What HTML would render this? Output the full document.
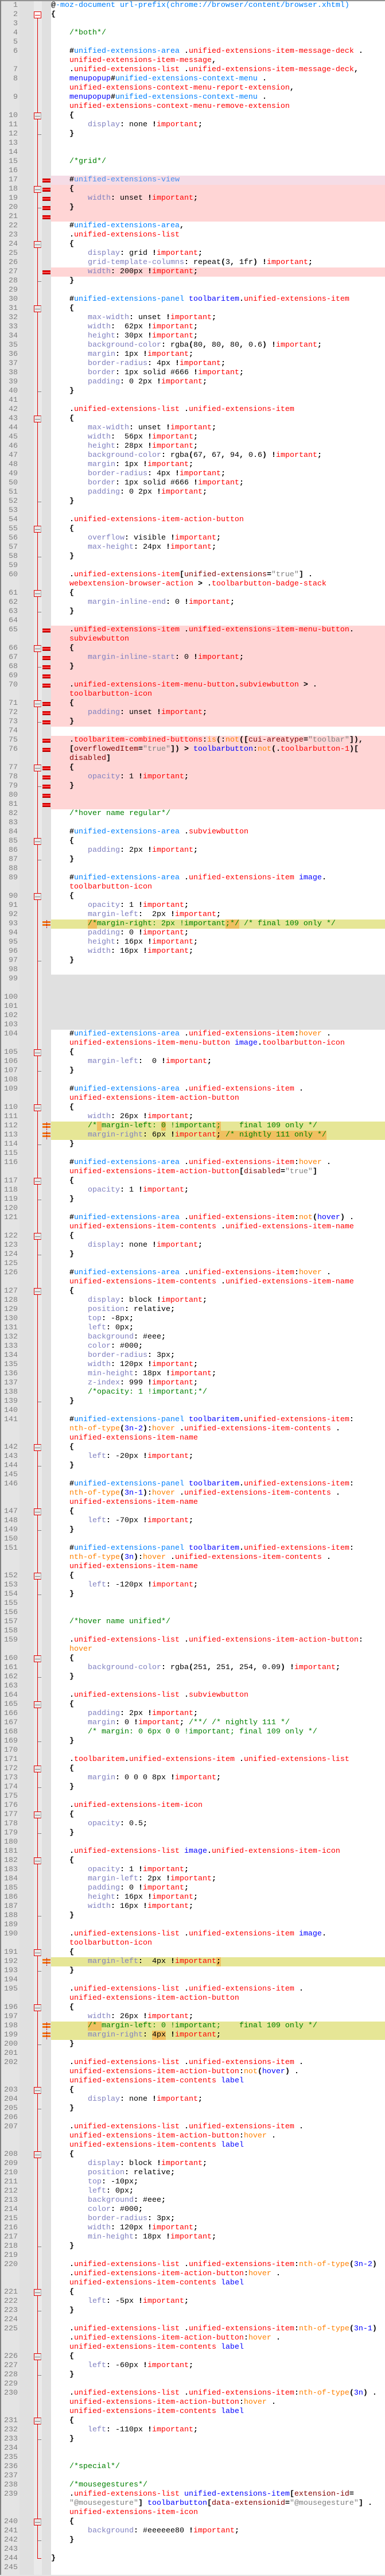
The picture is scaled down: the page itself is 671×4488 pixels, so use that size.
<!DOCTYPE html>
<html lang="en"><head><meta charset="utf-8"><title>userChrome.css compare</title>
<style>
html,body{margin:0;width:671px;height:4488px;overflow:hidden;background:#fff}
body{position:relative;font:13.33px/16px "Liberation Mono",monospace;color:#000}
.st{position:absolute;top:2px;height:4484px}
#tb{position:absolute;left:0;top:0;width:671px;height:1px;background:#a0a0a0}
#tb2{position:absolute;left:0;top:1px;width:671px;height:1px;background:#808080}
#lb{position:absolute;left:0;top:0;width:2px;height:4488px;background:#808080}
#bb{position:absolute;left:0;top:4486px;width:671px;height:2px;background:#e4e4e4}
#vl{position:absolute;left:65px;top:32px;width:1px;height:4426px;background:#e00000}
#vb{position:absolute;left:65px;top:4457px;width:7px;height:1px;background:#e00000}
#main{position:absolute;left:0;top:2px;width:671px}
p{margin:0;height:16px;padding-left:89px;position:relative;white-space:pre;line-height:16px}
tt{position:absolute;left:2px;width:29px;text-align:right;color:#808080;font:inherit}
b,i,s,u,a,q,em,abbr,samp,mark{font:inherit;font-style:normal;text-decoration:none;color:inherit}
b{font-weight:bold;color:#000}
i{color:#8080c0}
s{color:#f00}
u{color:#0080ff}
a{color:#00f}
q{color:#ff8000;quotes:none}
q:before,q:after{content:none}
em{color:#008000}
abbr{color:#800000}
samp{color:#808080}
mark{background:#f0c060;display:inline-block;height:16px;vertical-align:top}
.d,.e{background:linear-gradient(90deg,transparent 89px,#ffd5d5 89px)}
.x{background:linear-gradient(90deg,transparent 89px,#f5dce6 89px)}
.g{background:linear-gradient(90deg,transparent 89px,#e0e0e0 89px)}
.y{background:linear-gradient(90deg,transparent 89px,#e6e696 89px)}
.f:before,.F:before,.t:before,.d:after,.x:after,.y:after{content:"";position:absolute}
.f:before{left:59px;top:2px;width:13px;height:12px;box-sizing:border-box;border:1px solid #e00000;border-right-color:#aaa;background:linear-gradient(#808080,#808080) center/9px 1px no-repeat #e8e8e8}
.F:before{left:59px;top:2px;width:13px;height:12px;box-sizing:border-box;border:1px solid #e00000;background:linear-gradient(#e00000,#e00000) center/9px 1px no-repeat #fff}
.t:before{left:66px;top:8px;width:6px;height:1px;background:#808080}
.d:after,.x:after{left:74px;top:5px;width:14px;height:7px;background:linear-gradient(#c00000 0 1px,#e80000 1px 3px,#ff9090 3px 4px,#e00000 4px 6px,#a00000 6px)}
.y:after{left:74px;top:0;width:14px;height:16px;background:repeating-linear-gradient(#c00000 0 2px,transparent 2px 3px) 7px 1px/1px 14px no-repeat,linear-gradient(#f07010,#f07010) 0 3px/14px 3px no-repeat,linear-gradient(#f07010,#f07010) 0 8px/14px 3px no-repeat}
</style></head><body>
<div class="st" style="left:2px;width:32px;background:#e4e4e4"></div>
<div class="st" style="left:34px;width:25px;background:#e0e0e0"></div>
<div class="st" style="left:59px;width:14px;background:repeating-conic-gradient(#dcdcdc 0 25%,#f8f8f8 0 50%) 0 0/2px 2px"></div>
<div class="st" style="left:73px;width:16px;background:#e0e0e0"></div>
<div id="vl"></div><div id="vb"></div>
<div id="tb"></div><div id="tb2"></div><div id="lb"></div><div id="bb"></div>
<div id="main">
<p><tt>1</tt><b>@</b><u>-moz-document url-prefix(chrome://browser/content/browser.xhtml)</u></p>
<p class="F"><tt>2</tt><b>{</b></p>
<p><tt>3</tt></p>
<p><tt>4</tt>    <em>/*both*/</em></p>
<p><tt>5</tt></p>
<p><tt>6</tt>    <b>#</b><u>unified-extensions-area</u> <b>.</b><s>unified-extensions-item-message-deck</s> <b>.</b></p>
<p>    <s>unified-extensions-item-message</s><b>,</b></p>
<p><tt>7</tt>    <b>.</b><s>unified-extensions-list</s> <b>.</b><s>unified-extensions-item-message-deck</s><b>,</b></p>
<p><tt>8</tt>    <a>menupopup</a><b>#</b><u>unified-extensions-context-menu</u> <b>.</b></p>
<p>    <s>unified-extensions-context-menu-report-extension</s><b>,</b></p>
<p><tt>9</tt>    <a>menupopup</a><b>#</b><u>unified-extensions-context-menu</u> <b>.</b></p>
<p>    <s>unified-extensions-context-menu-remove-extension</s></p>
<p class="f"><tt>10</tt>    <b>{</b></p>
<p><tt>11</tt>        <i>display</i><b>:</b> none <b>!</b><s>important</s><b>;</b></p>
<p class="t"><tt>12</tt>    <b>}</b></p>
<p><tt>13</tt></p>
<p><tt>14</tt></p>
<p><tt>15</tt>    <em>/*grid*/</em></p>
<p><tt>16</tt></p>
<p class="x"><tt>17</tt>    <b>#</b><u style="color:#4a90f0">unified-extensions-view</u></p>
<p class="d f"><tt>18</tt>    <b>{</b></p>
<p class="d"><tt>19</tt>        <i>width</i><b>:</b> unset <b>!</b><s>important</s><b>;</b></p>
<p class="d t"><tt>20</tt>    <b>}</b></p>
<p class="d"><tt>21</tt></p>
<p><tt>22</tt>    <b>#</b><u>unified-extensions-area</u><b>,</b></p>
<p><tt>23</tt>    <b>.</b><s>unified-extensions-list</s></p>
<p class="f"><tt>24</tt>    <b>{</b></p>
<p><tt>25</tt>        <i>display</i><b>:</b> grid <b>!</b><s>important</s><b>;</b></p>
<p><tt>26</tt>        <i>grid-template-columns</i><b>:</b> repeat<b>(</b>3<b>,</b> 1fr<b>)</b> <b>!</b><s>important</s><b>;</b></p>
<p class="d"><tt>27</tt>        <i>width</i><b>:</b> 200px <b>!</b><s>important</s><b>;</b></p>
<p class="t"><tt>28</tt>    <b>}</b></p>
<p><tt>29</tt></p>
<p><tt>30</tt>    <b>#</b><u>unified-extensions-panel</u> <a>toolbaritem</a><b>.</b><s>unified-extensions-item</s></p>
<p class="f"><tt>31</tt>    <b>{</b></p>
<p><tt>32</tt>        <i>max-width</i><b>:</b> unset <b>!</b><s>important</s><b>;</b></p>
<p><tt>33</tt>        <i>width</i><b>:</b>  62px <b>!</b><s>important</s><b>;</b></p>
<p><tt>34</tt>        <i>height</i><b>:</b> 30px <b>!</b><s>important</s><b>;</b></p>
<p><tt>35</tt>        <i>background-color</i><b>:</b> rgba<b>(</b>80<b>,</b> 80<b>,</b> 80<b>,</b> 0.6<b>)</b> <b>!</b><s>important</s><b>;</b></p>
<p><tt>36</tt>        <i>margin</i><b>:</b> 1px <b>!</b><s>important</s><b>;</b></p>
<p><tt>37</tt>        <i>border-radius</i><b>:</b> 4px <b>!</b><s>important</s><b>;</b></p>
<p><tt>38</tt>        <i>border</i><b>:</b> 1px solid #666 <b>!</b><s>important</s><b>;</b></p>
<p><tt>39</tt>        <i>padding</i><b>:</b> 0 2px <b>!</b><s>important</s><b>;</b></p>
<p class="t"><tt>40</tt>    <b>}</b></p>
<p><tt>41</tt></p>
<p><tt>42</tt>    <b>.</b><s>unified-extensions-list</s> <b>.</b><s>unified-extensions-item</s></p>
<p class="f"><tt>43</tt>    <b>{</b></p>
<p><tt>44</tt>        <i>max-width</i><b>:</b> unset <b>!</b><s>important</s><b>;</b></p>
<p><tt>45</tt>        <i>width</i><b>:</b>  56px <b>!</b><s>important</s><b>;</b></p>
<p><tt>46</tt>        <i>height</i><b>:</b> 28px <b>!</b><s>important</s><b>;</b></p>
<p><tt>47</tt>        <i>background-color</i><b>:</b> rgba<b>(</b>67<b>,</b> 67<b>,</b> 94<b>,</b> 0.6<b>)</b> <b>!</b><s>important</s><b>;</b></p>
<p><tt>48</tt>        <i>margin</i><b>:</b> 1px <b>!</b><s>important</s><b>;</b></p>
<p><tt>49</tt>        <i>border-radius</i><b>:</b> 4px <b>!</b><s>important</s><b>;</b></p>
<p><tt>50</tt>        <i>border</i><b>:</b> 1px solid #666 <b>!</b><s>important</s><b>;</b></p>
<p><tt>51</tt>        <i>padding</i><b>:</b> 0 2px <b>!</b><s>important</s><b>;</b></p>
<p class="t"><tt>52</tt>    <b>}</b></p>
<p><tt>53</tt></p>
<p><tt>54</tt>    <b>.</b><s>unified-extensions-item-action-button</s></p>
<p class="f"><tt>55</tt>    <b>{</b></p>
<p><tt>56</tt>        <i>overflow</i><b>:</b> visible <b>!</b><s>important</s><b>;</b></p>
<p><tt>57</tt>        <i>max-height</i><b>:</b> 24px <b>!</b><s>important</s><b>;</b></p>
<p class="t"><tt>58</tt>    <b>}</b></p>
<p><tt>59</tt></p>
<p><tt>60</tt>    <b>.</b><s>unified-extensions-item</s><b>[</b><abbr>unified-extensions</abbr><b>=</b><samp>"true"</samp><b>]</b> <b>.</b></p>
<p>    <s>webextension-browser-action</s> <b>&gt;</b> <b>.</b><s>toolbarbutton-badge-stack</s></p>
<p class="f"><tt>61</tt>    <b>{</b></p>
<p><tt>62</tt>        <i>margin-inline-end</i><b>:</b> 0 <b>!</b><s>important</s><b>;</b></p>
<p class="t"><tt>63</tt>    <b>}</b></p>
<p><tt>64</tt></p>
<p class="d"><tt>65</tt>    <b>.</b><s>unified-extensions-item</s> <b>.</b><s>unified-extensions-item-menu-button</s><b>.</b></p>
<p class="e">    <s>subviewbutton</s></p>
<p class="d f"><tt>66</tt>    <b>{</b></p>
<p class="d"><tt>67</tt>        <i>margin-inline-start</i><b>:</b> 0 <b>!</b><s>important</s><b>;</b></p>
<p class="d t"><tt>68</tt>    <b>}</b></p>
<p class="d"><tt>69</tt></p>
<p class="d"><tt>70</tt>    <b>.</b><s>unified-extensions-item-menu-button</s><b>.</b><s>subviewbutton</s> <b>&gt;</b> <b>.</b></p>
<p class="e">    <s>toolbarbutton-icon</s></p>
<p class="d f"><tt>71</tt>    <b>{</b></p>
<p class="d"><tt>72</tt>        <i>padding</i><b>:</b> unset <b>!</b><s>important</s><b>;</b></p>
<p class="d t"><tt>73</tt>    <b>}</b></p>
<p><tt>74</tt></p>
<p class="d"><tt>75</tt>    <b>.</b><s>toolbaritem-combined-buttons</s><b>:</b><q>is</q><b>(:</b><q>not</q><b>([</b><abbr>cui-areatype</abbr><b>=</b><samp>"toolbar"</samp><b>]),</b></p>
<p class="d"><tt>76</tt>    <b>[</b><abbr>overflowedItem</abbr><b>=</b><samp>"true"</samp><b>])</b> <b>&gt;</b> <a>toolbarbutton</a><b>:</b><q>not</q><b>(.</b><s>toolbarbutton-1</s><b>)[</b></p>
<p class="e">    <abbr>disabled</abbr><b>]</b></p>
<p class="d f"><tt>77</tt>    <b>{</b></p>
<p class="d"><tt>78</tt>        <i>opacity</i><b>:</b> 1 <b>!</b><s>important</s><b>;</b></p>
<p class="d t"><tt>79</tt>    <b>}</b></p>
<p class="d"><tt>80</tt></p>
<p class="d"><tt>81</tt></p>
<p><tt>82</tt>    <em>/*hover name regular*/</em></p>
<p><tt>83</tt></p>
<p><tt>84</tt>    <b>#</b><u>unified-extensions-area</u> <b>.</b><s>subviewbutton</s></p>
<p class="f"><tt>85</tt>    <b>{</b></p>
<p><tt>86</tt>        <i>padding</i><b>:</b> 2px <b>!</b><s>important</s><b>;</b></p>
<p class="t"><tt>87</tt>    <b>}</b></p>
<p><tt>88</tt></p>
<p><tt>89</tt>    <b>#</b><u>unified-extensions-area</u> <b>.</b><s>unified-extensions-item</s> <a>image</a><b>.</b></p>
<p>    <s>toolbarbutton-icon</s></p>
<p class="f"><tt>90</tt>    <b>{</b></p>
<p><tt>91</tt>        <i>opacity</i><b>:</b> 1 <b>!</b><s>important</s><b>;</b></p>
<p><tt>92</tt>        <i>margin-left</i><b>:</b>  2px <b>!</b><s>important</s><b>;</b></p>
<p class="y"><tt>93</tt>        <em><mark>/*</mark>margin-right: 2px !important<mark>;*/</mark> /* final 109 only */</em></p>
<p><tt>94</tt>        <i>padding</i><b>:</b> 0 <b>!</b><s>important</s><b>;</b></p>
<p><tt>95</tt>        <i>height</i><b>:</b> 16px <b>!</b><s>important</s><b>;</b></p>
<p><tt>96</tt>        <i>width</i><b>:</b> 16px <b>!</b><s>important</s><b>;</b></p>
<p class="t"><tt>97</tt>    <b>}</b></p>
<p><tt>98</tt></p>
<p class="g"><tt>99</tt></p>
<p class="g"></p>
<p class="g"><tt>100</tt></p>
<p class="g"><tt>101</tt></p>
<p class="g"><tt>102</tt></p>
<p class="g"><tt>103</tt></p>
<p><tt>104</tt>    <b>#</b><u>unified-extensions-area</u> <b>.</b><s>unified-extensions-item</s><b>:</b><q>hover</q> <b>.</b></p>
<p>    <s>unified-extensions-item-menu-button</s> <a>image</a><b>.</b><s>toolbarbutton-icon</s></p>
<p class="f"><tt>105</tt>    <b>{</b></p>
<p><tt>106</tt>        <i>margin-left</i><b>:</b>  0 <b>!</b><s>important</s><b>;</b></p>
<p class="t"><tt>107</tt>    <b>}</b></p>
<p><tt>108</tt></p>
<p><tt>109</tt>    <b>#</b><u>unified-extensions-area</u> <b>.</b><s>unified-extensions-item</s> <b>.</b></p>
<p>    <s>unified-extensions-item-action-button</s></p>
<p class="f"><tt>110</tt>    <b>{</b></p>
<p><tt>111</tt>        <i>width</i><b>:</b> 26px <b>!</b><s>important</s><b>;</b></p>
<p class="y"><tt>112</tt>        <em>/*<mark> </mark>margin-left: <mark>0</mark> !important<mark>;</mark>    final 109 only */</em></p>
<p class="y"><tt>113</tt>        <i>margin-right</i><b>:</b> 6px <b>!</b><s>important</s><mark><b>;</b><em> /* nightly 111 only */</em></mark></p>
<p class="t"><tt>114</tt>    <b>}</b></p>
<p><tt>115</tt></p>
<p><tt>116</tt>    <b>#</b><u>unified-extensions-area</u> <b>.</b><s>unified-extensions-item</s><b>:</b><q>hover</q> <b>.</b></p>
<p>    <s>unified-extensions-item-action-button</s><b>[</b><abbr>disabled</abbr><b>=</b><samp>"true"</samp><b>]</b></p>
<p class="f"><tt>117</tt>    <b>{</b></p>
<p><tt>118</tt>        <i>opacity</i><b>:</b> 1 <b>!</b><s>important</s><b>;</b></p>
<p class="t"><tt>119</tt>    <b>}</b></p>
<p><tt>120</tt></p>
<p><tt>121</tt>    <b>#</b><u>unified-extensions-area</u> <b>.</b><s>unified-extensions-item</s><b>:</b><q>not</q><b>(</b><a>hover</a><b>)</b> <b>.</b></p>
<p>    <s>unified-extensions-item-contents</s> <b>.</b><s>unified-extensions-item-name</s></p>
<p class="f"><tt>122</tt>    <b>{</b></p>
<p><tt>123</tt>        <i>display</i><b>:</b> none <b>!</b><s>important</s><b>;</b></p>
<p class="t"><tt>124</tt>    <b>}</b></p>
<p><tt>125</tt></p>
<p><tt>126</tt>    <b>#</b><u>unified-extensions-area</u> <b>.</b><s>unified-extensions-item</s><b>:</b><q>hover</q> <b>.</b></p>
<p>    <s>unified-extensions-item-contents</s> <b>.</b><s>unified-extensions-item-name</s></p>
<p class="f"><tt>127</tt>    <b>{</b></p>
<p><tt>128</tt>        <i>display</i><b>:</b> block <b>!</b><s>important</s><b>;</b></p>
<p><tt>129</tt>        <i>position</i><b>:</b> relative<b>;</b></p>
<p><tt>130</tt>        <i>top</i><b>:</b> -8px<b>;</b></p>
<p><tt>131</tt>        <i>left</i><b>:</b> 0px<b>;</b></p>
<p><tt>132</tt>        <i>background</i><b>:</b> #eee<b>;</b></p>
<p><tt>133</tt>        <i>color</i><b>:</b> #000<b>;</b></p>
<p><tt>134</tt>        <i>border-radius</i><b>:</b> 3px<b>;</b></p>
<p><tt>135</tt>        <i>width</i><b>:</b> 120px <b>!</b><s>important</s><b>;</b></p>
<p><tt>136</tt>        <i>min-height</i><b>:</b> 18px <b>!</b><s>important</s><b>;</b></p>
<p><tt>137</tt>        <i>z-index</i><b>:</b> 999 <b>!</b><s>important</s><b>;</b></p>
<p><tt>138</tt>        <em>/*opacity: 1 !important;*/</em></p>
<p class="t"><tt>139</tt>    <b>}</b></p>
<p><tt>140</tt></p>
<p><tt>141</tt>    <b>#</b><u>unified-extensions-panel</u> <a>toolbaritem</a><b>.</b><s>unified-extensions-item</s><b>:</b></p>
<p>    <q>nth-of-type</q><b>(</b><a>3n-2</a><b>):</b><q>hover</q> <b>.</b><s>unified-extensions-item-contents</s> <b>.</b></p>
<p>    <s>unified-extensions-item-name</s></p>
<p class="f"><tt>142</tt>    <b>{</b></p>
<p><tt>143</tt>        <i>left</i><b>:</b> -20px <b>!</b><s>important</s><b>;</b></p>
<p class="t"><tt>144</tt>    <b>}</b></p>
<p><tt>145</tt></p>
<p><tt>146</tt>    <b>#</b><u>unified-extensions-panel</u> <a>toolbaritem</a><b>.</b><s>unified-extensions-item</s><b>:</b></p>
<p>    <q>nth-of-type</q><b>(</b><a>3n-1</a><b>):</b><q>hover</q> <b>.</b><s>unified-extensions-item-contents</s> <b>.</b></p>
<p>    <s>unified-extensions-item-name</s></p>
<p class="f"><tt>147</tt>    <b>{</b></p>
<p><tt>148</tt>        <i>left</i><b>:</b> -70px <b>!</b><s>important</s><b>;</b></p>
<p class="t"><tt>149</tt>    <b>}</b></p>
<p><tt>150</tt></p>
<p><tt>151</tt>    <b>#</b><u>unified-extensions-panel</u> <a>toolbaritem</a><b>.</b><s>unified-extensions-item</s><b>:</b></p>
<p>    <q>nth-of-type</q><b>(</b><a>3n</a><b>):</b><q>hover</q> <b>.</b><s>unified-extensions-item-contents</s> <b>.</b></p>
<p>    <s>unified-extensions-item-name</s></p>
<p class="f"><tt>152</tt>    <b>{</b></p>
<p><tt>153</tt>        <i>left</i><b>:</b> -120px <b>!</b><s>important</s><b>;</b></p>
<p class="t"><tt>154</tt>    <b>}</b></p>
<p><tt>155</tt></p>
<p><tt>156</tt></p>
<p><tt>157</tt>    <em>/*hover name unified*/</em></p>
<p><tt>158</tt></p>
<p><tt>159</tt>    <b>.</b><s>unified-extensions-list</s> <b>.</b><s>unified-extensions-item-action-button</s><b>:</b></p>
<p>    <q>hover</q></p>
<p class="f"><tt>160</tt>    <b>{</b></p>
<p><tt>161</tt>        <i>background-color</i><b>:</b> rgba<b>(</b>251<b>,</b> 251<b>,</b> 254<b>,</b> 0.09<b>)</b> <b>!</b><s>important</s><b>;</b></p>
<p class="t"><tt>162</tt>    <b>}</b></p>
<p><tt>163</tt></p>
<p><tt>164</tt>    <b>.</b><s>unified-extensions-list</s> <b>.</b><s>subviewbutton</s></p>
<p class="f"><tt>165</tt>    <b>{</b></p>
<p><tt>166</tt>        <i>padding</i><b>:</b> 2px <b>!</b><s>important</s><b>;</b></p>
<p><tt>167</tt>        <i>margin</i><b>:</b> 0 <b>!</b><s>important</s><b>;</b> <em>/**/ /* nightly 111 */</em></p>
<p><tt>168</tt>        <em>/* margin: 0 6px 0 0 !important; final 109 only */</em></p>
<p class="t"><tt>169</tt>    <b>}</b></p>
<p><tt>170</tt></p>
<p><tt>171</tt>    <b>.</b><s>toolbaritem</s><b>.</b><s>unified-extensions-item</s> <b>.</b><s>unified-extensions-list</s></p>
<p class="f"><tt>172</tt>    <b>{</b></p>
<p><tt>173</tt>        <i>margin</i><b>:</b> 0 0 0 8px <b>!</b><s>important</s><b>;</b></p>
<p class="t"><tt>174</tt>    <b>}</b></p>
<p><tt>175</tt></p>
<p><tt>176</tt>    <b>.</b><s>unified-extensions-item-icon</s></p>
<p class="f"><tt>177</tt>    <b>{</b></p>
<p><tt>178</tt>        <i>opacity</i><b>:</b> 0.5<b>;</b></p>
<p class="t"><tt>179</tt>    <b>}</b></p>
<p><tt>180</tt></p>
<p><tt>181</tt>    <b>.</b><s>unified-extensions-list</s> <a>image</a><b>.</b><s>unified-extensions-item-icon</s></p>
<p class="f"><tt>182</tt>    <b>{</b></p>
<p><tt>183</tt>        <i>opacity</i><b>:</b> 1 <b>!</b><s>important</s><b>;</b></p>
<p><tt>184</tt>        <i>margin-left</i><b>:</b> 2px <b>!</b><s>important</s><b>;</b></p>
<p><tt>185</tt>        <i>padding</i><b>:</b> 0 <b>!</b><s>important</s><b>;</b></p>
<p><tt>186</tt>        <i>height</i><b>:</b> 16px <b>!</b><s>important</s><b>;</b></p>
<p><tt>187</tt>        <i>width</i><b>:</b> 16px <b>!</b><s>important</s><b>;</b></p>
<p class="t"><tt>188</tt>    <b>}</b></p>
<p><tt>189</tt></p>
<p><tt>190</tt>    <b>.</b><s>unified-extensions-list</s> <b>.</b><s>unified-extensions-item</s> <a>image</a><b>.</b></p>
<p>    <s>toolbarbutton-icon</s></p>
<p class="f"><tt>191</tt>    <b>{</b></p>
<p class="y"><tt>192</tt>        <i>margin-left</i><b>:</b>  4px <b>!</b><s>important</s><mark><b>;</b></mark></p>
<p class="t"><tt>193</tt>    <b>}</b></p>
<p><tt>194</tt></p>
<p><tt>195</tt>    <b>.</b><s>unified-extensions-list</s> <b>.</b><s>unified-extensions-item</s> <b>.</b></p>
<p>    <s>unified-extensions-item-action-button</s></p>
<p class="f"><tt>196</tt>    <b>{</b></p>
<p><tt>197</tt>        <i>width</i><b>:</b> 26px <b>!</b><s>important</s><b>;</b></p>
<p class="y"><tt>198</tt>        <em><mark>/* </mark>margin-left: 0 !important;    final 109 only */</em></p>
<p class="y"><tt>199</tt>        <i>margin-right</i><b>:</b> <mark>4px</mark> <b>!</b><s>important</s><b>;</b></p>
<p class="t"><tt>200</tt>    <b>}</b></p>
<p><tt>201</tt></p>
<p><tt>202</tt>    <b>.</b><s>unified-extensions-list</s> <b>.</b><s>unified-extensions-item</s> <b>.</b></p>
<p>    <s>unified-extensions-item-action-button</s><b>:</b><q>not</q><b>(</b><a>hover</a><b>)</b> <b>.</b></p>
<p>    <s>unified-extensions-item-contents</s> <a>label</a></p>
<p class="f"><tt>203</tt>    <b>{</b></p>
<p><tt>204</tt>        <i>display</i><b>:</b> none <b>!</b><s>important</s><b>;</b></p>
<p class="t"><tt>205</tt>    <b>}</b></p>
<p><tt>206</tt></p>
<p><tt>207</tt>    <b>.</b><s>unified-extensions-list</s> <b>.</b><s>unified-extensions-item</s> <b>.</b></p>
<p>    <s>unified-extensions-item-action-button</s><b>:</b><q>hover</q> <b>.</b></p>
<p>    <s>unified-extensions-item-contents</s> <a>label</a></p>
<p class="f"><tt>208</tt>    <b>{</b></p>
<p><tt>209</tt>        <i>display</i><b>:</b> block <b>!</b><s>important</s><b>;</b></p>
<p><tt>210</tt>        <i>position</i><b>:</b> relative<b>;</b></p>
<p><tt>211</tt>        <i>top</i><b>:</b> -10px<b>;</b></p>
<p><tt>212</tt>        <i>left</i><b>:</b> 0px<b>;</b></p>
<p><tt>213</tt>        <i>background</i><b>:</b> #eee<b>;</b></p>
<p><tt>214</tt>        <i>color</i><b>:</b> #000<b>;</b></p>
<p><tt>215</tt>        <i>border-radius</i><b>:</b> 3px<b>;</b></p>
<p><tt>216</tt>        <i>width</i><b>:</b> 120px <b>!</b><s>important</s><b>;</b></p>
<p><tt>217</tt>        <i>min-height</i><b>:</b> 18px <b>!</b><s>important</s><b>;</b></p>
<p class="t"><tt>218</tt>    <b>}</b></p>
<p><tt>219</tt></p>
<p><tt>220</tt>    <b>.</b><s>unified-extensions-list</s> <b>.</b><s>unified-extensions-item</s><b>:</b><q>nth-of-type</q><b>(</b><a>3n-2</a><b>)</b></p>
<p>    <b>.</b><s>unified-extensions-item-action-button</s><b>:</b><q>hover</q> <b>.</b></p>
<p>    <s>unified-extensions-item-contents</s> <a>label</a></p>
<p class="f"><tt>221</tt>    <b>{</b></p>
<p><tt>222</tt>        <i>left</i><b>:</b> -5px <b>!</b><s>important</s><b>;</b></p>
<p class="t"><tt>223</tt>    <b>}</b></p>
<p><tt>224</tt></p>
<p><tt>225</tt>    <b>.</b><s>unified-extensions-list</s> <b>.</b><s>unified-extensions-item</s><b>:</b><q>nth-of-type</q><b>(</b><a>3n-1</a><b>)</b></p>
<p>    <b>.</b><s>unified-extensions-item-action-button</s><b>:</b><q>hover</q> <b>.</b></p>
<p>    <s>unified-extensions-item-contents</s> <a>label</a></p>
<p class="f"><tt>226</tt>    <b>{</b></p>
<p><tt>227</tt>        <i>left</i><b>:</b> -60px <b>!</b><s>important</s><b>;</b></p>
<p class="t"><tt>228</tt>    <b>}</b></p>
<p><tt>229</tt></p>
<p><tt>230</tt>    <b>.</b><s>unified-extensions-list</s> <b>.</b><s>unified-extensions-item</s><b>:</b><q>nth-of-type</q><b>(</b><a>3n</a><b>)</b> <b>.</b></p>
<p>    <s>unified-extensions-item-action-button</s><b>:</b><q>hover</q> <b>.</b></p>
<p>    <s>unified-extensions-item-contents</s> <a>label</a></p>
<p class="f"><tt>231</tt>    <b>{</b></p>
<p><tt>232</tt>        <i>left</i><b>:</b> -110px <b>!</b><s>important</s><b>;</b></p>
<p class="t"><tt>233</tt>    <b>}</b></p>
<p><tt>234</tt></p>
<p><tt>235</tt></p>
<p><tt>236</tt>    <em>/*special*/</em></p>
<p><tt>237</tt></p>
<p><tt>238</tt>    <em>/*mousegestures*/</em></p>
<p><tt>239</tt>    <b>.</b><s>unified-extensions-list</s> <a>unified-extensions-item</a><b>[</b><abbr>extension-id</abbr><b>=</b></p>
<p>    <samp>"@mousegesture"</samp><b>]</b> <a>toolbarbutton</a><b>[</b><abbr>data-extensionid</abbr><b>=</b><samp>"@mousegesture"</samp><b>]</b> <b>.</b></p>
<p>    <s>unified-extensions-item-icon</s></p>
<p class="f"><tt>240</tt>    <b>{</b></p>
<p><tt>241</tt>        <i>background</i><b>:</b> #eeeeee80 <b>!</b><s>important</s><b>;</b></p>
<p class="t"><tt>242</tt>    <b>}</b></p>
<p><tt>243</tt></p>
<p><tt>244</tt><b>}</b></p>
<p><tt>245</tt></p>
</div>
</body></html>
